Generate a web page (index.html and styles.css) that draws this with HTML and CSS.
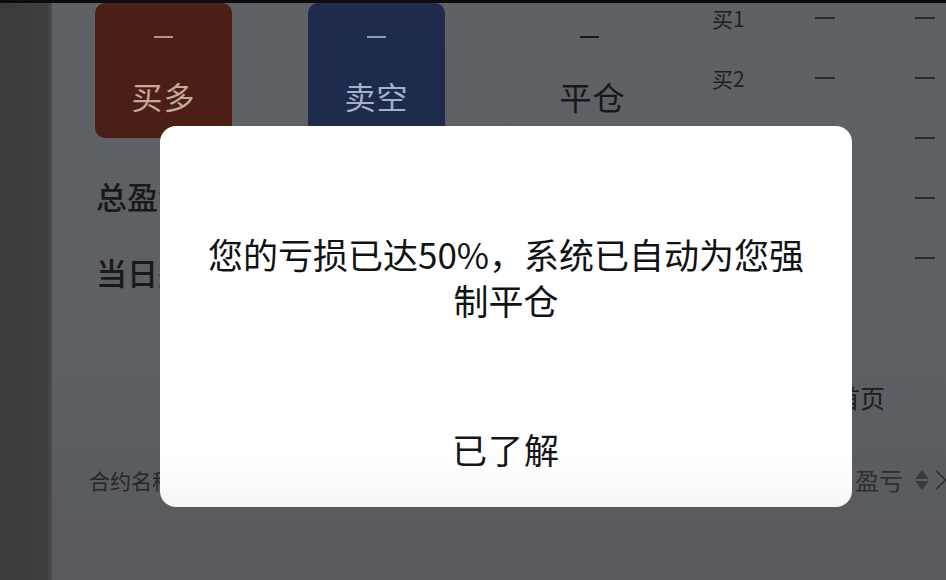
FILE: index.html
```html
<!DOCTYPE html>
<html lang="zh-CN">
<head>
<meta charset="utf-8">
<title>强制平仓</title>
<link rel="stylesheet" href="styles.css">
</head>
<body>
<div class="screen">
  <div class="topbar"></div>
  <div class="content">
    <div class="strip"></div>
    <div class="main">
      <div class="upper">
        <div class="trade">
          <div class="actions">
            <div class="btn btn-buy"><span class="dash"></span><span class="btn-label">买多</span></div>
            <div class="btn btn-sell"><span class="dash"></span><span class="btn-label">卖空</span></div>
            <div class="btn btn-close"><span class="dash"></span><span class="btn-label">平仓</span></div>
          </div>
          <div class="stats">
            <div class="stat">总盈亏</div>
            <div class="stat">当日盈亏</div>
          </div>
        </div>
        <div class="book">
          <div class="book-row"><span class="book-label">买1</span><span class="book-dash"></span><span class="book-dash"></span></div>
          <div class="book-row"><span class="book-label">买2</span><span class="book-dash"></span><span class="book-dash"></span></div>
          <div class="book-row"><span class="book-label"></span><span class="book-dash"></span><span class="book-dash"></span></div>
          <div class="book-row"><span class="book-label"></span><span class="book-dash"></span><span class="book-dash"></span></div>
          <div class="book-row"><span class="book-label"></span><span class="book-dash"></span><span class="book-dash"></span></div>
        </div>
      </div>
      <div class="tabs"><span class="tab">首页</span></div>
      <div class="thead">
        <span class="th">合约名称</span>
        <span class="th-right">
          <span class="th th-pl">盈亏</span>
          <span class="sort"><span class="up"></span><span class="down"></span></span>
          <svg class="chev" width="14" height="22" viewBox="0 0 14 22"><path d="M2 2 L12 11 L2 20" fill="none" stroke="#2a2b2d" stroke-width="1.6"/></svg>
        </span>
      </div>
    </div>
  </div>

  <div class="dialog">
    <div class="dialog-msg">您的亏损已达50%，系统已自动为您强制平仓</div>
    <div class="dialog-btn">已了解</div>
  </div>
</div>
</body>
</html>
```

FILE: styles.css
```css
* { box-sizing: border-box; }
html, body { margin: 0; padding: 0; }
body {
  width: 946px;
  height: 580px;
  overflow: hidden;
  background: #5c5f63;
  font-family: "Noto Sans CJK SC", "Noto Sans", sans-serif;
  color: #1b1c1e;
}
.screen {
  position: relative;
  width: 946px;
  height: 580px;
  display: flex;
  flex-direction: column;
  background: linear-gradient(180deg, #5e6165 0%, #5d6064 60%, #57595d 100%);
  overflow: hidden;
}
.topbar { height: 3px; background: #0c0c0c; flex: none; }
.content { flex: 1; display: flex; min-height: 0; }
.strip {
  width: 52px;
  flex: none;
  background: linear-gradient(90deg, #3d3b39 0%, #3f3e3c 90%, #4c4e50 100%);
}
.main { flex: 1; display: flex; flex-direction: column; min-width: 0; }

.upper { display: flex; align-items: flex-start; }
.trade { padding-left: 43px; display: flex; flex-direction: column; width: 660px; flex: none; }
.actions { display: flex; gap: 76px; }
.btn {
  width: 137px;
  height: 135px;
  border-radius: 10px;
  display: flex;
  flex-direction: column;
  align-items: center;
  padding-top: 33px;
}
.btn-buy { background: #4b1f15; color: #c6a89a; }
.btn-sell { background: #1e2b4c; color: #a7b0c6; }
.btn-close { background: transparent; color: #17181a; }
.dash { width: 19px; height: 2px; background: currentColor; opacity: 0.85; }
.btn-close .dash { opacity: 1; }
.btn-label { font-size: 31px; line-height: 40px; margin-top: 38px; letter-spacing: 1px; }
.btn-close .btn-label { font-size: 32px; padding-left: 6px; }

.stats { margin-top: 19px; display: flex; flex-direction: column; }
.stat {
  height: 76px;
  display: flex;
  align-items: center;
  font-size: 31px;
  font-weight: 500;
  padding-left: 1px;
  color: #18191b;
  white-space: nowrap;
}

.book { padding-top: 5px; display: flex; flex-direction: column; gap: 40px; }
.book-row { height: 20px; display: flex; align-items: center; }
.book-label { width: 103px; font-size: 21px; line-height: 20px; color: #1e1f21; }
.book-dash { width: 20px; height: 1.5px; background: #2a2b2d; margin-right: 80px; }

.tabs { margin-top: 73px; display: flex; justify-content: flex-end; padding-right: 61px; }
.tab { font-size: 25px; line-height: 30px; color: #1c1d1f; }

.thead {
  margin-top: 55px;
  display: flex;
  justify-content: space-between;
  align-items: center;
  padding-left: 37px;
}
.th { font-size: 21px; line-height: 26px; color: #26272a; }
.th-pl { font-size: 24px; color: #2e2f32; }
.th-right { display: flex; align-items: center; margin-right: -2px; }
.sort { display: flex; flex-direction: column; gap: 2px; margin-left: 12px; margin-right: 5px; }
.sort .up { width: 0; height: 0; border-left: 7px solid transparent; border-right: 7px solid transparent; border-bottom: 9px solid #3a3b3e; }
.sort .down { width: 0; height: 0; border-left: 7px solid transparent; border-right: 7px solid transparent; border-top: 9px solid #3a3b3e; }
.chev { display: block; }

.dialog {
  position: absolute;
  left: 160px;
  top: 126px;
  width: 692px;
  height: 381px;
  border-radius: 16px;
  background: linear-gradient(180deg, #ffffff 0%, #ffffff 85%, #f7f7f7 100%);
  display: flex;
  flex-direction: column;
  align-items: center;
  padding: 105px 42px 0;
}
.dialog-msg {
  font-size: 35px;
  line-height: 46px;
  text-align: center;
  color: #111214;
  width: 100%;
}
.dialog-btn {
  margin-top: 101px;
  font-size: 35px;
  line-height: 50px;
  color: #141517;
  letter-spacing: 1px;
}
```
